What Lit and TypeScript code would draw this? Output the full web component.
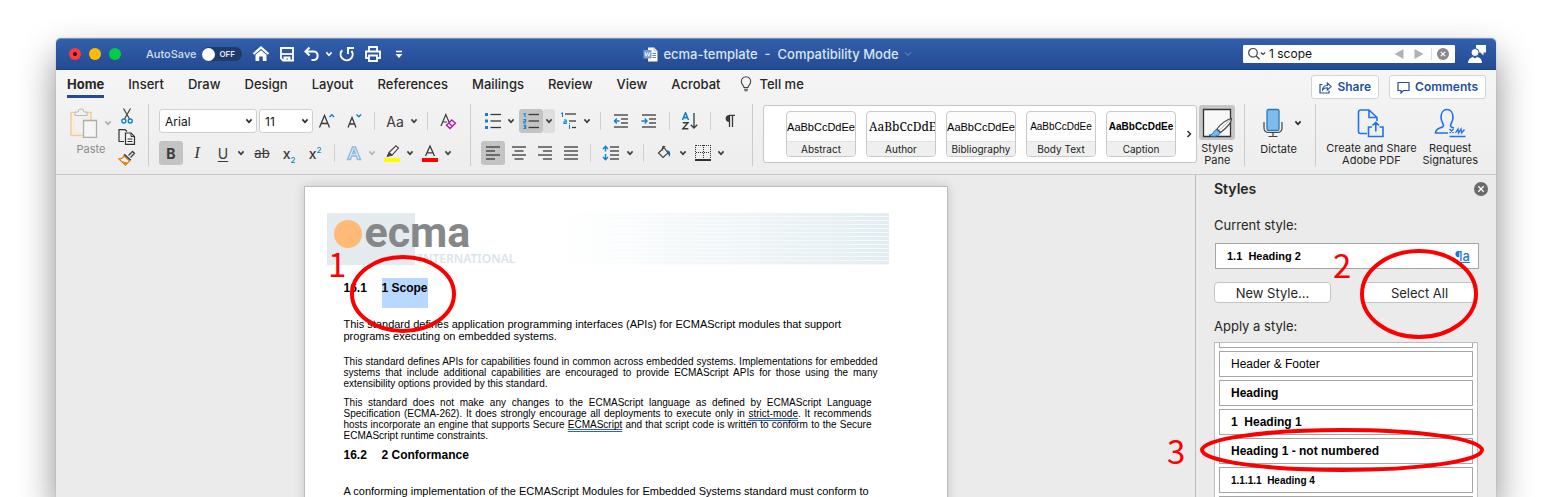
import { LitElement, html, css, svg } from "lit";
import { customElement, property } from "lit/decorators.js";

const icon = (w: number, h: number, body: unknown) =>
  html`<svg width=${w} height=${h} viewBox="0 0 ${w} ${h}" fill="none" stroke="currentColor" aria-hidden="true">${body}</svg>`;

const chevron = icon(8, 6, svg`<path d="M1.4 1.4 4 4.200 6.600 1.400" stroke-width="1.600"/>`);
const thinChevron = icon(8, 6, svg`<path d="M1 1.400 4 4.400 7 1.400" stroke-width="1"/>`);

const lines = (rows: number[][]) => svg`${rows.map(([x1, x2, y]) => svg`<path d="M${x1} ${y}H${x2}" stroke="#3a3a3a" stroke-width="1.3"/>`)}`;

const icons = {
  home: icon(18, 16, svg`<path d="M1.5 8 9 1.5 16.500 8" stroke-width="2.2"/><path d="M3.500 8.800 9 4.200 14.500 8.800V15H10.800V10.500H7.200V15H3.500Z" fill="currentColor" stroke="none"/>`),
  save: icon(16, 16, svg`<path d="M2 2H14V14.500H4L2 12.500Z" stroke-width="1.8"/><path d="M2 8H14" stroke-width="1.800"/><path d="M4.500 15V10.500H11.500V15H9V12.500H7.500V15Z" fill="currentColor" stroke="none"/>`),
  undo: icon(16, 16, svg`<path d="M5.500 1.500 1.500 5.500 5.500 9.500M1.500 5.500H10A4.300 4.300 0 0 1 10 14H7.500" stroke-width="2"/>`),
  redo: icon(16, 16, svg`<path d="M3.200 4.200A6 6 0 1 0 12.500 4.800" stroke-width="2"/><path d="M9 8V2H15" stroke-width="2"/>`),
  print: icon(18, 16, svg`<path d="M5 5V1H13V5M5 12H2V5.500H16V12H13" stroke-width="1.800"/><path d="M5 9.500H13V15H5Z" stroke-width="1.800"/>`),
  more: icon(10, 9, svg`<path d="M2 1.500H8" stroke-width="1.500"/><path d="M1.500 4H8.500L5 8Z" fill="currentColor" stroke="none"/>`),
  word: icon(15, 15, svg`<path d="M5 .5H11L14.500 4V14.500H5Z" fill="#fff" stroke="none"/><path d="M11 .5V4H14.500" stroke="#9db4dc" stroke-width=".8"/><path d="M9.500 6.500H13M9.500 8.500H13M9.500 10.500H13" stroke="#5f83c4"/><path d="M.5 3H8.500V11.500H.5Z" fill="#7e9cdb" stroke="none"/><path d="M2 5.300 3.200 9.300 4.500 5.800 5.800 9.300 7 5.300" stroke="#fff" stroke-width=".9"/>`),
  lens: icon(18, 14, svg`<circle cx="5" cy="5.800" r="4.300" stroke-width="1.200"/><path d="M8.200 9 11.500 12.300" stroke-width="1.300"/><path d="M12.800 5.500 15 7.500 17.200 5.500" stroke-width="1.200"/>`),
  prev: icon(10, 10, svg`<path d="M9.500 0V10L.5 5Z" fill="currentColor" stroke="none"/>`),
  nextHit: icon(10, 10, svg`<path d="M.5 0V10L9.500 5Z" fill="currentColor" stroke="none"/>`),
  clear: icon(14, 14, svg`<circle cx="7" cy="7" r="6" fill="#8a8a8a" stroke="none"/><path d="M4.800 4.800 9.200 9.200M9.200 4.800 4.800 9.200" stroke="#fff" stroke-width="1.200"/>`),
  close: icon(14, 14, svg`<circle cx="7" cy="7" r="7" fill="#6b6b6b" stroke="none"/><path d="M4.300 4.300 9.700 9.700M9.700 4.300 4.300 9.700" stroke="#fff" stroke-width="1.300"/>`),
  user: icon(18, 18, svg`<g fill="currentColor" stroke="none"><path d="M8 0H18V7.500H15.500V10.500L12.500 7.500H8Z"/><circle cx="7" cy="7.500" r="4" stroke="#26509b" stroke-width="1"/><path d="M0 18C.5 13.500 3 12.500 5 12L7 13.500 9 12C11.500 12.500 13.800 13.500 14 18Z"/></g>`),
  bulb: icon(12, 16, svg`<path d="M4 11.500C4 9.500 1.300 8.500 1.300 5.500A4.700 4.700 0 0 1 10.700 5.500C10.700 8.500 8 9.500 8 11.500ZM4 13.200H8M4.500 14.800H7.500" stroke="#444" stroke-width="1.100"/>`),
  share: icon(13, 13, svg`<path d="M3.500 3.500H1V12H10V9.500" stroke-width="1.200"/><path d="M3.500 9C3.500 6 5.500 4.500 8.300 4.500V2L12.300 5.500 8.300 9V6.800C6 6.800 4.500 7.500 3.500 9Z" stroke-width="1.100"/>`),
  comment: icon(13, 13, svg`<path d="M1 1.500H12V9.500H6.500L4 12V9.500H1Z" stroke-width="1.200"/>`),
  paste: icon(28, 30, svg`<path d="M6 4.500H1V27.500H13M17 4.500H21V12" stroke="#f0cd98" stroke-width="1.400"/><path d="M2.500 6H19.500V12H13V26H2.500Z" fill="#f8ecd6" stroke="none"/><path d="M5 8H17V24H5Z" fill="#f1f1f1" stroke="none"/><path d="M5 7.500V4H8A3 3 0 0 1 14 4H17V7.500Z" fill="#f2f2f2" stroke="#b9b9b9"/><path d="M13.500 12.500H26.500V29.500H13.500Z" fill="#f5f5f5" stroke="#adadad" stroke-width="1.300"/>`),
  cut: icon(12, 16, svg`<path d="M2.500.5 8.500 11M9.500.5 3.500 11" stroke="#444" stroke-width="1.200"/><circle cx="2.800" cy="13" r="2" stroke="#0d84c8" stroke-width="1.400"/><circle cx="9.200" cy="13" r="2" stroke="#0d84c8" stroke-width="1.400"/>`),
  copy: icon(18, 16, svg`<path d="M6 12.500H1V.6H7L9 2.500" stroke="#333" stroke-width="1.200"/><path d="M7.500 4H13L16.500 7.500V15.300H7.500Z" fill="#f4f4f4" stroke="#333" stroke-width="1.200"/><path d="M13 4V7.500H16.500M9.500 10H14.500M9.500 12.500H14.500" stroke="#333"/>`),
  brush: icon(18, 16, svg`<path d="M10.500 5.500 14.500 1.500 16.500 3.200 12.500 7.500" stroke="#444" stroke-width="1.300"/><path d="M6 4.500 12.500 10.500" stroke="#444" stroke-width="2.200"/><path d="M6 6 11.500 11 7.500 15 1 9C3.500 9 5 8 6 6Z" fill="#fff" stroke="#e8801f" stroke-width="1.300"/><path d="M3.500 11.500 7.500 15 9.500 13Z" fill="#e8801f" stroke="#e8801f"/>`),
  grow: icon(18, 18, svg`<path d="M1.500 15.500 6.500 3.500 11.500 15.500M3.200 11.500H9.800" stroke="#3a3a3a" stroke-width="1.300"/><path d="M11.500 5 13.800 2.700 16.100 5" stroke="#0d84c8" stroke-width="1.400"/>`),
  shrink: icon(18, 18, svg`<path d="M3 15.500 7 5.500 11 15.500M4.400 12H9.600" stroke="#3a3a3a" stroke-width="1.300"/><path d="M11.500 2.500 13.800 4.800 16.100 2.500" stroke="#0d84c8" stroke-width="1.400"/>`),
  erase: icon(18, 18, svg`<path d="M2 14 6.800 2.500 10 10M3.700 10H8" stroke="#3a3a3a" stroke-width="1.200"/><path d="M7.500 13.200 12.800 8 16.500 11.300 11 16.500Z M9.800 11 13.500 14.300" stroke="#b01eaa" stroke-width="1.400"/>`),
  effect: icon(18, 18, svg`<path d="M2.500 15.500 7.500 3H10.500L15.500 15.500H12.500L11.300 12H6.700L5.500 15.500ZM7.700 9.500H10.300L9 5.800Z" fill="#dcebf5" stroke="#8fb9d8" stroke-width="1.400"/>`),
  marker: icon(18, 18, svg`<path d="M1 14H17V18H1Z" fill="#ffff00" stroke="none"/><path d="M6 8.500 13 1.800 15.500 4 9 11.200Z" fill="#f5f5f5" stroke="#444" stroke-width="1.100"/><path d="M6 8.500 9 11.200 4 12.500Z" fill="#444" stroke="#444"/>`),
  color: icon(18, 18, svg`<path d="M1 14H17V18H1Z" fill="#f00" stroke="none"/><path d="M4.500 12 9 2 13.500 12M6 8.800H12" stroke="#3a3a3a" stroke-width="1.300"/>`),
  bullets: icon(16, 16, svg`<path d="M0 0H3V3H0ZM0 6.500H3V9.500H0ZM0 13H3V16H0Z" fill="#0d84c8" stroke="none"/>${lines([[5.5, 16, 1.5], [5.5, 16, 8], [5.5, 16, 14.5]])}`),
  numbers: icon(16, 16, svg`<g stroke="#0d84c8" stroke-width="1.100"><path d="M.5 1 2 .6V4M.5 6.500H2.600V8.200H.8V10H3M.5 12.200H2.600V15.500H.5M1 13.900H2.600"/></g>${lines([[5.5, 16, 1.5], [5.5, 16, 8], [5.5, 16, 14.5]])}`),
  outline: icon(18, 18, svg`<g stroke="#0d84c8" stroke-width="1.100"><path d="M1 1.500 2.500 1V5M4 8H6.200V11.500H4V9.700H6.200M9.500 13V17M9.500 11.200V12.200"/></g>${lines([[5, 16, 2], [9, 16, 9], [12, 16, 15.5]])}`),
  outdent: icon(16, 16, svg`${lines([[1, 15, 2], [8, 15, 6], [8, 15, 10], [1, 15, 14]])}<path d="M6.500 8H1.500M3.800 5.600 1.500 8 3.800 10.400" stroke="#0d84c8" stroke-width="1.400"/>`),
  indent: icon(16, 16, svg`${lines([[1, 15, 2], [8, 15, 6], [8, 15, 10], [1, 15, 14]])}<path d="M.5 8H6M3.700 5.600 6 8 3.700 10.400" stroke="#0d84c8" stroke-width="1.400"/>`),
  sort: icon(18, 18, svg`<path d="M1.500 8 4.500.8 7.500 8M2.500 5.600H6.500" stroke="#0d84c8" stroke-width="1.600"/><path d="M1.800 10.700H7L1.800 16.800H7.300" stroke="#3a3a3a" stroke-width="1.400"/><path d="M13 1V16M9.800 12.800 13 16 16.200 12.800" stroke="#3a3a3a" stroke-width="1.300"/>`),
  pilcrow: icon(12, 14, svg`<path d="M5 1.500V7.500A3 3 0 0 1 5 1.500Z" fill="#3a3a3a" stroke="#3a3a3a"/><path d="M5.500 1V13M8.500 1V13M5 1.300H11" stroke="#3a3a3a" stroke-width="1.300"/>`),
  left: icon(16, 16, lines([[1, 15, 2], [1, 10, 6], [1, 15, 10], [1, 10, 14]])),
  center: icon(16, 16, lines([[1, 15, 2], [3.5, 12.5, 6], [1, 15, 10], [3.5, 12.5, 14]])),
  right: icon(16, 16, lines([[1, 15, 2], [6, 15, 6], [1, 15, 10], [6, 15, 14]])),
  justify: icon(16, 16, lines([[1, 15, 2], [1, 15, 6], [1, 15, 10], [1, 15, 14]])),
  spacing: icon(18, 16, svg`${lines([[8, 17, 2], [8, 17, 6], [8, 17, 10], [8, 17, 14]])}<path d="M3.500 1.500V6.500M1 3.900 3.500 1.300 6 3.900M3.500 9V14.500M1 12.100 3.500 14.700 6 12.100" stroke="#0d84c8" stroke-width="1.400"/>`),
  bucket: icon(16, 16, svg`<path d="M2.500 8 8 2.500 12 8 7 12.500Z" stroke="#444" stroke-width="1.200"/><path d="M6.500 5.500V2A1.500 1.500 0 0 1 9 2" stroke="#444" stroke-width="1.100"/><path d="M11 5.500C14.500 5.500 14.500 8 13.800 12L12 9Z" fill="#1768b0" stroke="none"/>`),
  border: icon(16, 16, svg`<path d="M1 .5H15M1 7.500H15M.5 0V14M8.500 0V14M15.500 0V14" stroke="#333" stroke-dasharray="1 1"/><path d="M0 15H16" stroke="#000" stroke-width="1.600"/>`),
  next: icon(6, 8, svg`<path d="M1.500 1 4.500 4 1.500 7" stroke-width="1.400"/>`),
  pane: icon(32, 32, svg`<path d="M2.500 2.500H29.500V29.500H2.500Z" fill="#f8f8f8" stroke="#333" stroke-width="1.300"/><path d="M8 28C13 28 12 23 16 22.500L19 25.500C19 29 12 31 8 28Z" fill="#74b7ea" stroke="#1b6bb0"/><path d="M16 22C19 18 25 13 30.500 11.500C31 16 24 22 19.500 25.500Z" fill="#fff" stroke="#444" stroke-width="1.200"/><path d="M18 23.500 29 13" stroke="#999" stroke-width=".8"/>`),
  mic: icon(22, 30, svg`<rect x="5" y="1.500" width="12" height="21" rx="1.500" fill="#7cbcee" stroke="#2a7ab8" stroke-width="1.300"/><path d="M2 14V20C2 23 4 24.500 7 24.500H15C18 24.500 20 23 20 20V14M11 24.500V28.500M6.500 28.500H15.500" stroke="#444" stroke-width="1.200"/>`),
  pdf: icon(28, 30, svg`<path d="M10 25.500H3.500A2 2 0 0 1 1.500 23.500V4A2 2 0 0 1 3.500 2H12L20 9.500V13M12 2V9.500H20" stroke-width="1.600"/><path d="M15 19H11.500V28.500H26V19H22.500M18.800 23.500V14.500M15.500 17.500 18.800 14.300 22 17.500" stroke-width="1.600"/>`),
  sign: icon(32, 30, svg`<path d="M14 25H1.500C1.500 19 9.500 20.500 9.500 17.500 9.500 15.500 7 13.500 7 9.500 7 4.500 9.500 1.500 13 1.500S19 4.500 19 9.500C19 13.500 16.500 15.500 16.500 17.500 16.500 18.800 18 19.500 20 20" stroke-width="1.600"/><path d="M15.500 21 19.500 25M19.500 21 15.500 25M21.500 25 24 21 24.500 25 27 21 27.500 25 30.500 21.500M15.500 28.500H31.500" stroke-width="1.300"/>`),
};

@customElement("tool-button")
class ToolButton extends LitElement {
  @property() label = "";
  @property({ type: Boolean }) wide = false;
  @property({ type: Boolean }) on = false;
  @property({ type: Boolean }) menu = false;
  @property({ attribute: false }) glyph: unknown = null;

  static styles = css`
    :host { display: flex; border-radius: 3px; }
    button { display: flex; align-items: center; justify-content: center; width: 24px; height: 24px; padding: 0; border: 0; background: none; color: #3a3a3a; font: 500 14px Inter, sans-serif; border-radius: 3px; }
    svg { display: block; }
    .wide { width: 26px; }
    .menu { width: 12px; }
    .on { background: #c3c3c3; }
    .on + .menu { background: #dedede; }
    .dim { color: #b4b4b4; }
  `;

  render() {
    return html`<button class="${this.wide ? "wide" : ""} ${this.on ? "on" : ""}" aria-label=${this.label}>${this.glyph ?? html`<slot></slot>`}</button>
      ${this.menu ? html`<button class="menu ${this.label === "Text effects" ? "dim" : ""}" aria-label="${this.label} options">${chevron}</button>` : ""}`;
  }
}

const TABS = ["Home", "Insert", "Draw", "Design", "Layout", "References", "Mailings", "Review", "View", "Acrobat"];

const GALLERY = [
  ["Abstract", "plain"],
  ["Author", "serif"],
  ["Bibliography", "plain"],
  ["Body Text", "small"],
  ["Caption", "strong"],
];

const STYLES = [
  ["", ""],
  ["Header & Footer", ""],
  ["Heading", "bold"],
  ["1\u00a0\u00a0Heading 1", "bold"],
  ["Heading 1 - not numbered", "bold"],
  ["1.1.1.1\u00a0\u00a0Heading 4", "bold minor"],
  ["", ""],
];

@customElement("app-root")
class AppRoot extends LitElement {
  static styles = css`
    :host { display: block; height: 100vh; overflow: hidden; box-sizing: border-box; padding: 38px 56px 0; background: #fff; font: 13px/16px Inter, sans-serif; color: #262626; }
    * { box-sizing: border-box; }
    button { font: inherit; color: inherit; padding: 0; border: 0; background: none; display: flex; align-items: center; justify-content: center; }
    svg { display: block; flex: none; }
    .window { display: flex; flex-direction: column; height: 100%; border-radius: 5px 5px 0 0; background: #ebebeb; box-shadow: 0 0 1px #777, 0 18px 36px rgba(0, 0, 0, 0.46); }

    .titlebar { display: grid; grid-template-columns: 1fr auto 1fr; align-items: center; height: 32px; flex: none; padding: 0 10px 0 13px; border-radius: 5px 5px 0 0; border-top: 1px solid #6f8fc6; border-bottom: 1px solid #1d4488; background: linear-gradient(#325fab, #234b93); color: #fff; }
    .cluster { display: flex; align-items: center; }
    .lights { display: flex; gap: 8px; margin-right: 25px; }
    .light { display: flex; width: 12px; height: 12px; border-radius: 50%; background: #fdbc02; }
    .light.red { background: #fc3d3c; align-items: center; justify-content: center; }
    .light.red::after { content: ""; width: 4px; height: 4px; border-radius: 50%; background: #4e0405; }
    .light.green { background: #05cc47; }
    .auto { display: flex; align-items: center; gap: 6px; font-weight: 500; font-size: 11px; color: #d3def0; margin-right: 6px; }
    .toggle { appearance: none; margin: 0; width: 40px; height: 14px; border-radius: 7px; background: #1f3a6c; display: flex; align-items: center; }
    .toggle::before { content: ""; width: 13px; height: 13px; border-radius: 50%; background: #fff; }
    .toggle::after { content: "OFF"; font: 600 8px Inter, sans-serif; color: #e2e8f2; margin-left: 4px; }
    .quick button { width: 26px; height: 20px; }
    .quick .undo { width: 24px; }
    .quick .drop { width: 10px; }
    .name { display: flex; align-items: center; gap: 5px; font-weight: 500; color: #dbe4f4; white-space: pre; }
    .faint { color: #7c98cb; }
    .right { justify-content: flex-end; gap: 13px; }
    .search { display: flex; align-items: center; width: 212px; height: 18px; padding: 0 5px; background: #fff; border-radius: 1px; color: #444; }
    .search input { flex: 1; min-width: 0; border: 0; padding: 0 3px; background: none; outline: 0; font: 12px/16px Inter, sans-serif; color: #111; }
    .arrow { width: 20px; color: #b2b2b2; }
    .search .reset { border-left: 1px solid #ddd; padding-left: 4px; height: 12px; margin-left: 2px; }

    .ribbon { flex: none; background: linear-gradient(#f5f5f5, #ededed); border-bottom: 1px solid #c9c9c9; }
    .tabs { display: flex; align-items: center; height: 34px; padding: 0 10px 0 11px; }
    .tabs nav { display: flex; gap: 24px; flex: 1; align-self: flex-start; }
    .tabs a { color: inherit; text-decoration: none; font-weight: 500; padding-top: 6px; height: 28px; white-space: nowrap; border-bottom: 3px solid transparent; }
    .tabs a.active { font-weight: 700; border-color: #234b93; }
    .tabs a.tell { display: flex; align-items: flex-start; gap: 8px; margin-left: -5px; }
    .actions { display: flex; gap: 10px; }
    .actions button { height: 24px; gap: 5px; padding: 0 7px; background: #fff; border: 1px solid #d4d4d4; border-radius: 3px; color: #234f9b; font-weight: 600; font-size: 12px; }

    .groups { display: flex; height: 70px; padding-bottom: 8px; }
    .group { display: flex; padding: 0 10px; border-right: 1px solid #cbcbcb; }
    .rows { display: flex; flex-direction: column; justify-content: space-between; padding: 5px 0 1px; }
    .row { display: flex; align-items: center; gap: 2px; }
    .rows .row { height: 24px; }
    .bar { width: 1px; height: 18px; margin: 0 5px; background: #cfcfcf; }
    .fontGroup { padding-right: 9px; }
    .clip { padding-left: 14px; gap: 6px; width: 93px; }
    .clip .rows { padding: 4px 0 0; color: #333; }
    .tile { display: flex; flex-direction: column; align-items: center; font-size: 11px; line-height: 12px; white-space: nowrap; color: #262626; justify-content: flex-start; }
    .tile .face { display: flex; align-items: center; height: 36px; margin-top: 1px; margin-bottom: 2px; gap: 10px; }
    .pastebtn { color: #8a8a8a; }
    .pastebtn .face { gap: 6px; color: #aaa; }
    .box { position: relative; display: flex; align-items: center; height: 24px; background: #fff; border: 1px solid #cfcfcf; border-radius: 3px; }
    .box select { appearance: none; width: 100%; height: 100%; border: 0; background: none; padding: 0 5px; font: 12px Inter, sans-serif; color: #111; }
    .box svg { position: absolute; right: 3px; pointer-events: none; }
    .font { width: 98px; }
    .size { width: 54px; }
    .tb { font-weight: 700; }
    .ti { font-style: italic; font-family: "Liberation Serif", serif; font-size: 17px; font-weight: 400; }
    .tu { text-decoration: underline; font-weight: 400; text-underline-offset: 2px; }
    .ts { text-decoration: line-through; font-weight: 400; font-size: 13px; }
    .ta { font-weight: 400; font-size: 14px; }
    sub, sup { font-size: 8px; line-height: 0; color: #0d84c8; }

    .galleryGroup { flex: 1; min-width: 0; padding-right: 9px; }
    .gallery { flex: 1; min-width: 0; display: flex; align-items: center; gap: 10px; height: 58px; margin: 1px 2px 0 0; padding: 0 5px 0 22px; background: #fff; border: 1px solid #c6c6c6; border-radius: 3px; overflow: hidden; }
    .card { flex: none; display: flex; flex-direction: column; width: 70px; height: 46px; border: 1px solid #c9c9c9; border-radius: 4px; overflow: hidden; background: #fcfcfc; font-size: 10px; color: #222; }
    .card .sample { flex: 1; display: flex; align-items: center; justify-content: center; width: 100%; overflow: hidden; font: 11px "Liberation Sans", sans-serif; color: #000; }
    .card .serif { font: 12px "Noto Serif", "Liberation Serif", serif; justify-content: flex-start; padding-left: 2px; }
    .card .small { font-size: 10px; }
    .card .strong { font-size: 10px; font-weight: 700; }
    .card .label { width: 100%; height: 15px; line-height: 14px; background: #efefef; border-top: 1px solid #e2e2e2; }
    .more { margin-left: auto; }
    .paneFace { background: #c6c6c6; border-radius: 3px; padding: 0 2px; }
    .dictate { padding: 0 13px 0 15px; }
    .dictate .tile { align-items: flex-start; }
    .dictate .face { margin-left: 2px; gap: 10px; }
    .adobe { border: 0; gap: 6px; padding: 0 18px 0 10px; }
    .adobe .face { color: #2172e5; }

    .work { flex: 1; min-height: 0; display: flex; }
    .desk { flex: 1; min-width: 0; display: flex; justify-content: center; align-items: flex-start; overflow: hidden; padding-top: 11px; }
    .page { position: relative; flex: none; width: 644px; height: 910px; border: 1px solid #bdbdbd; background: #fff; box-shadow: 0 0 10px rgba(0, 0, 0, 0.16); padding: 26px 75px 0 39px; font: 11px/12px "Liberation Sans", Arial, sans-serif; color: #000; }
    .banner { display: flex; height: 52px; margin: 0 -17px; background: linear-gradient(90deg, #fff 42%, transparent), repeating-linear-gradient(#e3edf1 0 3px, #f3f8fa 3px 4px); }
    .mark { display: grid; width: 88px; height: 52px; background: #e3ebef; grid-template-columns: 38px 1fr; align-items: center; white-space: nowrap; }
    .dot { width: 28px; height: 28px; border-radius: 50%; background: #ffba78; margin: -10px 0 0 7px; }
    .wordmark { font: 700 43px/40px Roboto, sans-serif; color: #868788; margin-top: -14px; }
    .intl { align-self: flex-end; font: 600 12px/12px "Noto Sans", sans-serif; color: #dae5ea; margin-left: 4px; }
    h2 { display: grid; grid-template-columns: 38px auto; justify-content: start; font-size: 12px; line-height: 20px; margin: 0; }
    h2.first { margin-top: 13px; height: 30px; }
    mark { background: #b9d8ff; color: inherit; }
    .page p { margin: 0; text-align: justify; }
    .page .lead { text-align: left; }
    .page h2.first + .lead { margin-top: 10px; }
    .page .body { font-size: 10px; line-height: 11px; }
    .page .lead + .body { margin: 14px -6px 8px 0; }
    .page .body + h2 { margin-top: 4px; margin-bottom: 20px; }
    .gram { text-decoration: underline double #2f5fd8 1px; text-decoration-skip-ink: none; }

    .pane { position: relative; flex: none; width: 301px; border-left: 1px solid #b9b9b9; padding: 5px 18px 0; display: flex; flex-direction: column; }
    .pane h1 { display: flex; justify-content: space-between; align-items: center; margin: 0 -10px 0 0; font-size: 14px; line-height: 18px; font-weight: 600; }
    .pane .caption { line-height: 18px; margin-top: 18px; }
    .current { display: flex; align-items: center; justify-content: space-between; height: 26px; margin: 9px -1px 13px 1px; padding: 0 8px 0 11px; border: 1px solid #a5a5a5; background: #fff; font: 700 11px "Liberation Sans", sans-serif; color: #000; white-space: pre; }
    .current u { font: 500 13px/20px Inter, sans-serif; color: #1b74d8; text-decoration-skip-ink: none; }
    .pair { display: flex; justify-content: space-between; }
    .pair button { width: 117px; height: 21px; background: #fff; border: 1px solid #c4c4c4; border-radius: 4px; }
    .pane .caption.apply { margin-top: 14px; }
    .list { flex: 1; min-height: 0; overflow: hidden; margin: 7px 0 0; padding: 0 4px; list-style: none; border: 1px solid #bdbdbd; border-bottom: 0; background: #fff; display: flex; flex-direction: column; gap: 3px; justify-content: flex-start; }
    .list button { width: 100%; height: 26px; flex: none; justify-content: flex-start; padding: 0 11px; border: 1px solid #a5a5a5; font: 12px "Liberation Sans", sans-serif; color: #000; }
    .list li:first-child button { height: 5px; border-top: 0; }
    .list .bold { font-weight: 700; }
    .list .minor { font-size: 10px; }

    .note { position: absolute; pointer-events: none; fill: none; stroke: #fb0000; stroke-width: 4; }
    .note text { fill: #fb0000; stroke: none; font: 33px "Noto Sans CJK SC", sans-serif; }
    .noteScope { left: 20px; top: 60px; }
    .notePane { left: -36px; top: 65px; }
  `;

  render() {
    return html`<div class="window">
      <header class="titlebar">
        <div class="cluster">
          <div class="lights">
            <button class="light red" aria-label="Close"></button>
            <button class="light" aria-label="Minimize"></button>
            <button class="light green" aria-label="Zoom"></button>
          </div>
          <label class="auto">AutoSave<input class="toggle" type="checkbox" role="switch" /></label>
          <div class="cluster quick">
            <button aria-label="Home">${icons.home}</button>
            <button aria-label="Save">${icons.save}</button>
            <button class="undo" aria-label="Undo">${icons.undo}</button>
            <button class="drop" aria-label="Undo history">${chevron}</button>
            <button aria-label="Repeat">${icons.redo}</button>
            <button aria-label="Print">${icons.print}</button>
            <button aria-label="Customize toolbar">${icons.more}</button>
          </div>
        </div>
        <div class="name">${icons.word}<span>ecma-template  -  Compatibility Mode</span><span class="faint">${thinChevron}</span></div>
        <div class="cluster right">
          <div class="search">
            ${icons.lens}<input aria-label="Search in document" .value=${"1 scope"} />
            <button class="arrow" aria-label="Previous result">${icons.prev}</button>
            <button class="arrow" aria-label="Next result">${icons.nextHit}</button>
            <button class="reset" aria-label="Clear search">${icons.clear}</button>
          </div>
          <button aria-label="Account">${icons.user}</button>
        </div>
      </header>
      <div class="ribbon">
        <div class="tabs">
          <nav>
            ${TABS.map((t, i) => html`<a href="#" class=${i === 0 ? "active" : ""}>${t}</a>`)}
            <a href="#" class="tell">${icons.bulb}Tell me</a>
          </nav>
          <div class="actions">
            <button>${icons.share}Share</button>
            <button>${icons.comment}Comments</button>
          </div>
        </div>
        <div class="groups">${this.clipboard()}${this.fontGroup()}${this.paragraph()}${this.gallery()}${this.extras()}</div>
      </div>
      <div class="work">${this.document()}${this.stylesPane()}</div>
    </div>`;
  }

  private clipboard() {
    return html`<div class="group clip">
      <button class="tile pastebtn"><span class="face">${icons.paste}${chevron}</span>Paste</button>
      <div class="rows">
        <button aria-label="Cut">${icons.cut}</button>
        <button aria-label="Copy">${icons.copy}</button>
        <button aria-label="Format painter">${icons.brush}</button>
      </div>
    </div>`;
  }

  private fontGroup() {
    return html`<div class="group fontGroup">
      <div class="rows">
        <div class="row">
          <div class="box font"><select aria-label="Font"><option>Arial</option></select>${chevron}</div>
          <div class="box size"><select aria-label="Font size"><option>11</option></select>${chevron}</div>
          <tool-button label="Grow font" .glyph=${icons.grow}></tool-button>
          <tool-button wide label="Shrink font" .glyph=${icons.shrink}></tool-button>
          <span class="bar"></span>
          <tool-button wide menu label="Change case"><span class="ta">Aa</span></tool-button>
          <span class="bar"></span>
          <tool-button wide label="Clear formatting" .glyph=${icons.erase}></tool-button>
        </div>
        <div class="row">
          <tool-button on label="Bold"><span class="tb">B</span></tool-button>
          <tool-button label="Italic"><span class="ti">I</span></tool-button>
          <tool-button menu label="Underline"><span class="tu">U</span></tool-button>
          <tool-button wide label="Strikethrough"><span class="ts">ab</span></tool-button>
          <tool-button label="Subscript"><span>x<sub>2</sub></span></tool-button>
          <tool-button label="Superscript"><span>x<sup>2</sup></span></tool-button>
          <span class="bar"></span>
          <tool-button menu label="Text effects" .glyph=${icons.effect}></tool-button>
          <tool-button menu label="Highlight" .glyph=${icons.marker}></tool-button>
          <tool-button menu label="Font color" .glyph=${icons.color}></tool-button>
        </div>
      </div>
    </div>`;
  }

  private paragraph() {
    return html`<div class="group">
      <div class="rows">
        <div class="row">
          <tool-button menu label="Bullets" .glyph=${icons.bullets}></tool-button>
          <tool-button menu on label="Numbering" .glyph=${icons.numbers}></tool-button>
          <tool-button menu label="Multilevel list" .glyph=${icons.outline}></tool-button>
          <span class="bar"></span>
          <tool-button wide label="Decrease indent" .glyph=${icons.outdent}></tool-button>
          <tool-button wide label="Increase indent" .glyph=${icons.indent}></tool-button>
          <span class="bar"></span>
          <tool-button wide label="Sort" .glyph=${icons.sort}></tool-button>
          <span class="bar"></span>
          <tool-button label="Show marks" .glyph=${icons.pilcrow}></tool-button>
        </div>
        <div class="row">
          <tool-button on label="Align left" .glyph=${icons.left}></tool-button>
          <tool-button label="Center" .glyph=${icons.center}></tool-button>
          <tool-button label="Align right" .glyph=${icons.right}></tool-button>
          <tool-button label="Justify" .glyph=${icons.justify}></tool-button>
          <span class="bar"></span>
          <tool-button wide menu label="Line spacing" .glyph=${icons.spacing}></tool-button>
          <span class="bar"></span>
          <tool-button wide menu label="Shading" .glyph=${icons.bucket}></tool-button>
          <tool-button menu label="Borders" .glyph=${icons.border}></tool-button>
        </div>
      </div>
    </div>`;
  }

  private gallery() {
    return html`<div class="group galleryGroup">
      <div class="gallery">
        ${GALLERY.map(([name, kind]) => html`<button class="card"><span class="sample ${kind}">AaBbCcDdEe</span><span class="label">${name}</span></button>`)}
        <button class="more" aria-label="More styles">${icons.next}</button>
      </div>
      <button class="tile"><span class="face paneFace">${icons.pane}</span><span>Styles<br />Pane</span></button>
    </div>`;
  }

  private extras() {
    return html`<div class="group dictate">
        <button class="tile"><span class="face">${icons.mic}${chevron}</span>Dictate</button>
      </div>
      <div class="group adobe">
        <button class="tile"><span class="face">${icons.pdf}</span><span>Create and Share<br />Adobe PDF</span></button>
        <button class="tile"><span class="face">${icons.sign}</span><span>Request<br />Signatures</span></button>
      </div>`;
  }

  private document() {
    return html`<main class="desk">
      <article class="page">
        <div class="banner">
          <div class="mark"><span class="dot"></span><span class="wordmark">ecma</span></div>
          <span class="intl">INTERNATIONAL</span>
        </div>
        <h2 class="first"><span>16.1</span><mark>1 Scope</mark></h2>
        <p class="lead">This standard defines application programming interfaces (APIs) for ECMAScript modules that support programs executing on embedded systems.</p>
        <p class="body">This standard defines APIs for capabilities found in common across embedded systems. Implementations for embedded systems that include additional capabilities are encouraged to provide ECMAScript APIs for those using the many extensibility options provided by this standard.</p>
        <p class="body">This standard does not make any changes to the ECMAScript language as defined by ECMAScript Language Specification (ECMA-262). It does strongly encourage all deployments to execute only in <span class="gram">strict-mode</span>. It recommends hosts incorporate an engine that supports Secure <span class="gram">ECMAScript</span> and that script code is written to conform to the Secure ECMAScript runtime constraints.</p>
        <h2><span>16.2</span><span>2 Conformance</span></h2>
        <p class="lead">A conforming implementation of the ECMAScript Modules for Embedded Systems standard must conform to</p>
        <svg class="note noteScope" width="140" height="90" viewBox="325 247 140 90">
          <text x="328" y="277">1</text>
          <ellipse cx="403" cy="294" rx="51" ry="37" />
        </svg>
      </article>
    </main>`;
  }

  private stylesPane() {
    return html`<aside class="pane">
      <h1>Styles<button aria-label="Close pane">${icons.close}</button></h1>
      <div class="caption">Current style:</div>
      <div class="current"><span>1.1  Heading 2</span><u>¶a</u></div>
      <div class="pair"><button>New Style...</button><button>Select All</button></div>
      <div class="caption apply">Apply a style:</div>
      <ul class="list">
        ${STYLES.map(([name, kind]) => html`<li><button class=${kind} aria-label=${name || "Style"}>${name}</button></li>`)}
      </ul>
      <svg class="note notePane" width="330" height="240" viewBox="1160 240 330 240">
        <text x="1333" y="278">2</text>
        <text x="1167" y="464">3</text>
        <ellipse cx="1419" cy="294" rx="57" ry="43" />
        <ellipse cx="1342" cy="450" rx="140" ry="20" />
      </svg>
    </aside>`;
  }
}
